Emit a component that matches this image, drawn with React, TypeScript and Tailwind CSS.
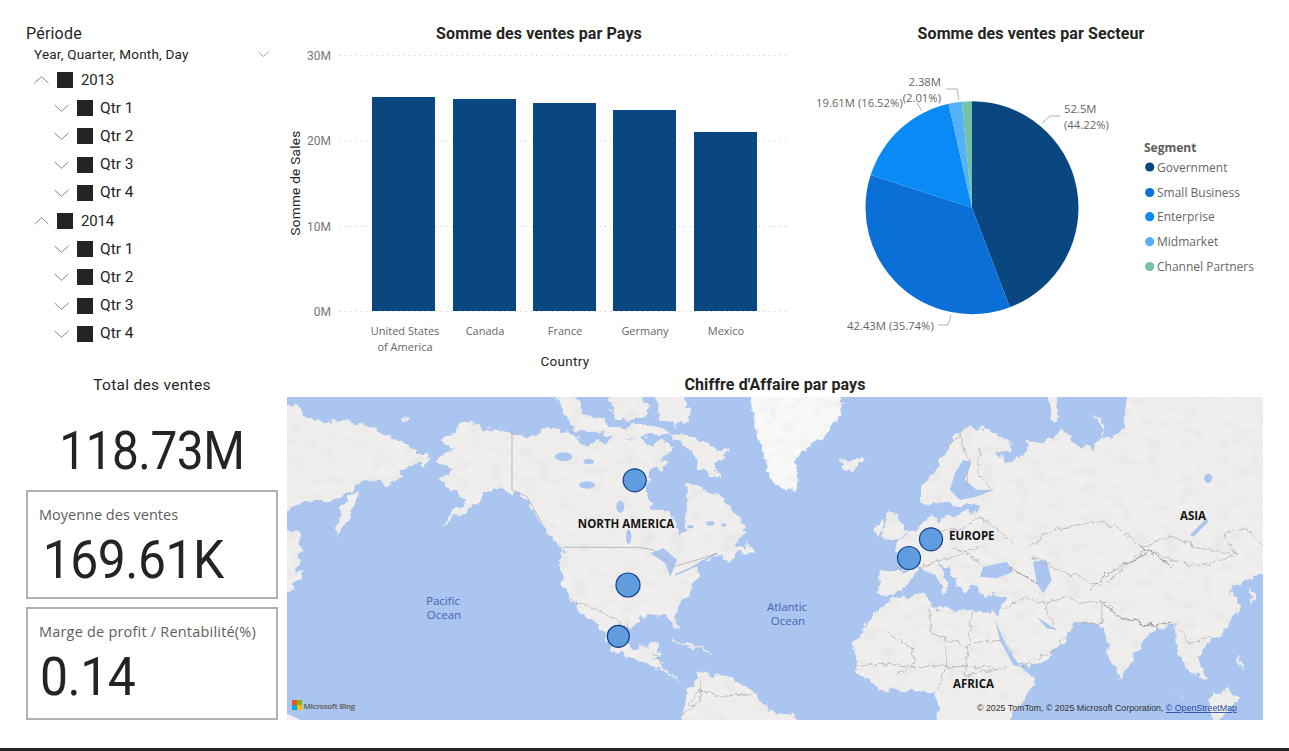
import React from "react"

const din = "font-['Roboto',sans-serif]"
const segoe = "font-['Open_Sans',sans-serif]"

const Chevron = ({ up = false, small = false }: { up?: boolean, small?: boolean }) => (
    <svg width={small ? 11 : 15} height={small ? 6 : 8} viewBox="0 0 16 9" preserveAspectRatio="none" className="shrink-0" fill="none" stroke="#7f7d7b" strokeWidth="1">
        <polyline points={up ? "0.5,8 8,0.8 15.5,8" : "0.5,1 8,8.2 15.5,1"} />
    </svg>
)

const TreeRow = ({ label, level }: { label: string, level: number }) => (
    <div className={`flex items-center h-[28.2px] ${level === 0 ? "pl-[8px]" : "pl-[28px]"}`}>
        <Chevron up={level === 0} />
        <span className="w-[16px] h-[16px] ml-[8px] bg-[#252423]" />
        <span className={`text-[#252423] ${din} ${level === 0 ? "ml-[8px] text-[15px] tracking-[-0.2px]" : "ml-[7px] text-[15.5px]"}`}>{label}</span>
    </div>
)

const quarters = ["Qtr 1", "Qtr 2", "Qtr 3", "Qtr 4"]

const Slicer = () => (
    <div className="h-[375px] pt-[24px]">
        <div className={`h-[20px] leading-[20px] text-[16px] tracking-[0.2px] text-[#252423] ${din}`}>Période</div>
        <div className="flex items-center justify-between h-[20px] mb-[2px] pl-[8px] pr-[18px]">
            <span className={`text-[13.5px] tracking-[0.2px] text-[#252423] ${din}`}>Year, Quarter, Month, Day</span>
            <Chevron small />
        </div>
        {["2013", "2014"].map((year) => (
            <div key={year}>
                <TreeRow label={year} level={0} />
                {quarters.map((q) => <TreeRow key={year + q} label={q} level={1} />)}
            </div>
        ))}
    </div>
)

const KpiCard = ({ label, value, height, pad, track = "" }: { label: string, value: string, height: string, pad: string, track?: string }) => (
    <div className={`w-[252px] border-2 border-[#b3b0ad] px-[11px] pt-[13px] ${height}`}>
        <div className={`text-[14.5px] leading-[20px] text-[#605e5c] ${segoe} ${track}`}>{label}</div>
        <div className={`text-[53px] leading-[60px] mt-[5px] tracking-[-0.5px] text-[#252423] scale-x-[0.94] origin-left ${din} ${pad}`}>{value}</div>
    </div>
)

const BarChart = () => {
    const ticks = [{ y: 55.7, t: "30M" }, { y: 141, t: "20M" }, { y: 226.5, t: "10M" }, { y: 311.7, t: "0M" }]
    const bars = [
        { x: 372, top: 97, a: "United States", b: "of America", c: 405 },
        { x: 453, top: 99, a: "Canada", c: 485 },
        { x: 533, top: 103, a: "France", c: 565 },
        { x: 613, top: 110, a: "Germany", c: 645 },
        { x: 694, top: 132, a: "Mexico", c: 726 },
    ]
    return (
        <svg width="516" height="328" viewBox="287 44 516 328" className="block">
            {ticks.map((k) => (
                <g key={k.t}>
                    <line x1="340" x2="790" y1={k.y} y2={k.y} stroke="#bdbbb8" strokeWidth="1" strokeDasharray="1 4.3" />
                    <text x="331" y={k.y + 4} textAnchor="end" fontSize="12" fill="#777" fontFamily="Roboto">{k.t}</text>
                </g>
            ))}
            {bars.map((b) => (
                <g key={b.a}>
                    <rect x={b.x} y={b.top} width="63" height={311 - b.top} fill="#0a4680" />
                    <text x={b.c} y="335" textAnchor="middle" fontSize="11" fill="#666" fontFamily="Open Sans">{b.a}</text>
                    {b.b && <text x={b.c} y="351" textAnchor="middle" fontSize="11" fill="#666" fontFamily="Open Sans">{b.b}</text>}
                </g>
            ))}
            <text x="565" y="366" textAnchor="middle" fontSize="13.5" fill="#252423" fontFamily="Roboto" letterSpacing="0.3">Country</text>
            <text transform="translate(300 183) rotate(-90)" textAnchor="middle" fontSize="13.5" fill="#252423" fontFamily="Roboto" letterSpacing="0.3">Somme de Sales</text>
        </svg>
    )
}

const slices = [
    { pct: 44.22, color: "#0a4680", name: "Government", y: 167 },
    { pct: 35.74, color: "#0a6fd6", name: "Small Business", y: 192.5 },
    { pct: 16.52, color: "#0a8af5", name: "Enterprise", y: 216.7 },
    { pct: 2.01, color: "#55b2f8", name: "Midmarket", y: 241.7 },
    { pct: 1.51, color: "#74c1a4", name: "Channel Partners", y: 266.5 },
]

const PieChart = () => {
    const cx = 972, cy = 207.7, r = 106.5
    let acc = 0
    const point = (p: number) => {
        const a = (p / 100) * Math.PI * 2
        return `${cx + r * Math.sin(a)} ${cy - r * Math.cos(a)}`
    }
    const label = { fontSize: 11.3, fill: "#666", fontFamily: "Open Sans" }
    const leader = { fill: "none", stroke: "#b3b0ad", strokeWidth: 1 }
    return (
        <svg width="486" height="328" viewBox="803 44 486 328" className="block">
            {slices.map((s) => {
                const start = acc
                acc += s.pct
                return <path key={s.name} d={`M${cx} ${cy} L${point(start)} A${r} ${r} 0 ${s.pct > 50 ? 1 : 0} 1 ${point(acc)} Z`} fill={s.color} />
            })}
            <polyline {...leader} points="1042,123 1050,116 1060,116" />
            <polyline {...leader} points="946,89 957,89 959,100" />
            <polyline {...leader} points="917,103 922,111" />
            <polyline {...leader} points="938,325 948,325 951,315" />
            <text x="1064" y="113" {...label}>52.5M</text>
            <text x="1064" y="129" {...label}>(44.22%)</text>
            <text x="816" y="107" {...label}>19.61M (16.52%)</text>
            <text x="941" y="86" textAnchor="end" {...label}>2.38M</text>
            <text x="941" y="102" textAnchor="end" {...label}>(2.01%)</text>
            <text x="847" y="330" {...label}>42.43M (35.74%)</text>
            <text x="1144" y="152" fontSize="12" fontWeight="700" fill="#605e5c" fontFamily="Open Sans">Segment</text>
            {slices.map((s) => (
                <g key={s.name + "-legend"}>
                    <circle cx="1149.7" cy={s.y} r="4.6" fill={s.color} />
                    <text x="1157" y={s.y + 4.5} fontSize="12" fill="#666" fontFamily="Open Sans">{s.name}</text>
                </g>
            ))}
        </svg>
    )
}

const land = "#f0efed"
const water = "#a9c5f0"
const border = "#b4b2ad"

const WorldMap = () => (
    <svg width="976" height="323" viewBox="287 397 976 323" className="block bg-[#a9c5f0]">
        <defs>
            <filter id="soft"><feGaussianBlur stdDeviation="0.35" /></filter>
            {/* rough coast lines plus faint shading on land */}
            <filter id="relief" x="-5%" y="-5%" width="110%" height="110%">
                <feTurbulence type="fractalNoise" baseFrequency="0.035" numOctaves="4" seed="7" result="coast" />
                <feDisplacementMap in="SourceGraphic" in2="coast" scale="34" xChannelSelector="R" yChannelSelector="G" result="rough" />
                <feTurbulence type="fractalNoise" baseFrequency="0.02 0.035" numOctaves="3" seed="4" />
                <feColorMatrix values="0 0 0 0 0.66  0 0 0 0 0.66  0 0 0 0 0.64  0 0 0 0.7 -0.3" />
                <feComposite in2="rough" operator="in" result="shade" />
                <feMerge><feMergeNode in="rough" /><feMergeNode in="shade" /></feMerge>
            </filter>
            <filter id="wobble" x="-5%" y="-5%" width="110%" height="110%">
                <feTurbulence type="fractalNoise" baseFrequency="0.05" numOctaves="3" seed="11" result="n" />
                <feDisplacementMap in="SourceGraphic" in2="n" scale="22" xChannelSelector="R" yChannelSelector="G" />
            </filter>
        </defs>
        <g filter="url(#soft)">
            {/* left half, traced at 3x from the Americas */}
            <g transform="translate(287 390) scale(0.3333)">
                <g fill={land} filter="url(#relief)">
                    <polygon points="-30,45 35,45 50,75 100,95 150,90 200,100 270,115 300,140 340,150 390,190 430,195 410,225 370,225 345,235 345,265 310,285 270,275 220,280 190,305 130,330 70,330 -30,365" />
                    <polygon points="215,300 205,340 175,400 155,445 150,380 185,320" />
                    <polygon points="30,420 45,470 40,510 20,545 50,540 20,590 -30,630 -30,410" />
                    <polygon points="340,85 370,85 360,97 340,95" />
                    <polygon points="465,150 500,125 540,90 590,115 640,120 675,125 720,145 760,120 790,110 830,130 880,140 890,165 930,150 960,160 990,130 1020,150 1060,140 1090,170 1130,150 1165,170 1130,205 1140,240 1100,230 1080,270 1075,320 1100,350 1150,370 1170,410 1185,440 1195,420 1200,340 1195,280 1240,290 1300,320 1340,360 1380,420 1345,460 1400,490 1350,490 1330,515 1290,495 1240,520 1220,590 1190,630 1160,680 1180,720 1165,710 1140,675 1060,680 1030,720 1010,700 1030,770 1080,770 1110,760 1125,790 1100,810 1130,830 1160,860 1200,880 1170,870 1110,830 1020,800 975,775 950,730 920,700 885,665 850,630 825,570 815,520 830,480 800,450 760,400 730,340 700,315 640,290 600,295 570,345 500,385 450,420 520,345 540,320 480,300 465,270 500,240 450,215 470,190 490,170" />
                    <polygon points="810,20 860,15 890,70 950,85 960,120 870,125 840,90" />
                    <polygon points="880,105 1000,112 1100,100 1150,130 1000,150" />
                    <polygon points="960,15 1060,10 1090,70 1020,100 980,80" />
                    <polygon points="1100,10 1190,10 1210,90 1170,110 1120,90" />
                    <polygon points="1150,130 1220,140 1270,170 1330,185 1280,220 1300,270 1240,240 1210,190" />
                    <polygon points="1180,1020 1200,900 1240,850 1320,860 1400,900 1440,960 1500,1020" />
                    <polygon points="1150,745 1210,760 1280,790 1220,775" />
                    <polygon points="1380,455 1410,490 1370,490" />
                    <polygon points="-30,960 30,985 70,1020 -30,1020" />
                </g>
                <g fill="#f9f9f8" filter="url(#relief)">
                    <polygon points="1390,0 1530,0 1530,300 1470,290 1440,220 1410,130 1395,60" />
                </g>
                <g fill={water}>
                    <polygon points="1090,490 1130,475 1170,510 1150,560 1135,520" />
                    <ellipse cx="830" cy="200" rx="26" ry="13" />
                    <ellipse cx="900" cy="285" rx="24" ry="11" />
                    <ellipse cx="1000" cy="350" rx="12" ry="18" />
                    <ellipse cx="1025" cy="440" rx="8" ry="22" />
                    <ellipse cx="905" cy="215" rx="16" ry="8" />
                    <ellipse cx="1270" cy="400" rx="12" ry="7" />
                    <ellipse cx="1210" cy="410" rx="10" ry="5" />
                    <ellipse cx="1310" cy="405" rx="8" ry="5" />
                </g>
                <polyline points="1165,555 1220,530 1290,490" fill="none" stroke={water} strokeWidth="5" />
                <g fill="none" stroke={border} strokeWidth="2.5">
                    <polyline points="675,125 675,300 720,320 765,400" />
                    <polyline points="830,472 1055,472 1100,480 1160,530 1230,510 1290,490" />
                </g>
                <g fill="none" stroke={border} strokeWidth="2.5" filter="url(#wobble)">
                    <polyline points="850,630 930,660 990,690 1020,720" />
                    <polyline points="1100,790 1130,830" />
                    <polyline points="1200,950 1240,900 1300,920 1400,910" />
                    <polyline points="1240,870 1240,930 1180,980" />
                </g>
            </g>
            {/* right half, Europe, Africa and Asia */}
            <g transform="translate(780 390) scale(0.3333)">
                <g fill="#f9f9f8" filter="url(#relief)">
                    <polygon points="-30,0 185,0 180,80 140,130 90,170 40,210 -30,280" />
                </g>
                <g fill={land} filter="url(#relief)">
                    <polygon points="175,205 250,210 210,250" />
                    <polygon points="805,10 830,10 835,90 815,80" />
                    <polygon points="935,70 975,100 965,140 1000,160 960,195 940,175 975,130" />
                    <polygon points="420,340 420,290 470,230 500,170 560,110 620,115 700,160 690,190 640,190 680,215 740,190 745,150 790,155 860,125 900,165 950,180 1000,140 1030,120 1040,60 1040,0 1480,0 1480,540 1400,570 1350,590 1385,650 1360,690 1320,740 1270,760 1255,800 1280,860 1230,850 1195,790 1180,700 1110,730 1070,790 1020,870 990,800 970,710 900,700 855,720 860,745 800,810 735,830 700,800 650,690 660,660 680,620 600,610 580,590 600,580 560,600 530,590 510,540 475,510 510,590 490,610 465,560 425,530 370,545 300,540 295,610 350,615 390,570 415,545 350,480 350,450 420,410 450,370 470,390 500,385 540,370 590,370 590,335 540,355 510,340 470,340 440,340" />
                    <polygon points="330,625 440,610 455,650 575,665 645,665 690,790 735,845 770,870 710,950 680,1020 470,1020 470,905 300,900 230,840 225,760 270,690" />
                    <polygon points="310,440 330,345 350,380 380,430 340,450" />
                    <polygon points="285,410 310,395 315,425 285,435" />
                    <polygon points="1290,925 1350,890 1370,930 1300,1020" />
                    <polygon points="1160,900 1225,930 1210,925" />
                    <polygon points="1375,790 1390,840 1375,830" />
                    <polygon points="1410,590 1430,620 1415,640" />
                    <polygon points="-30,965 40,975 70,1020 -30,1020" />
                </g>
                <g fill={water}>
                    <polygon points="510,300 525,250 550,210 575,215 555,270 590,300 640,300 590,320 540,330" />
                    <polygon points="610,530 680,515 700,545 650,565 600,560" />
                    <polygon points="760,515 800,510 815,570 790,610 770,580" />
                    <polygon points="645,690 680,770 720,830 700,825 660,750" />
                    <polygon points="770,680 830,720 800,715" />
                    <ellipse cx="1285" cy="265" rx="12" ry="14" />
                    <polygon points="1230,435 1280,385 1285,395 1240,440" />
                </g>
                <g fill="none" stroke={border} strokeWidth="2.5" filter="url(#wobble)">
                    <polyline points="315,725 400,780 400,830 350,850" />
                    <polyline points="450,650 450,730 495,745 565,770 575,665" />
                    <polyline points="575,755 660,755" />
                    <polyline points="230,830 300,820 400,830 500,830 640,830" />
                    <polyline points="495,745 500,830 470,905" />
                    <polyline points="565,770 555,860 680,830" />
                    <polyline points="755,465 800,430 880,405 960,395 1010,410 1080,470 1180,440 1250,470 1330,490 1365,490 1330,430 1400,415 1450,470" />
                    <polyline points="760,500 830,540 900,560 960,590 1000,560" />
                    <polyline points="1180,700 1230,760 1290,740" />
                    <polyline points="790,640 870,620 900,640 960,630 970,700 900,700" />
                    <polyline points="660,660 740,620 790,640 830,720" />
                    <polyline points="720,830 810,790 860,740" />
                    <polyline points="300,540 420,530 520,500 600,470" />
                    <polyline points="470,420 540,420 600,380 700,460" />
                    <polyline points="500,170 540,135 570,220 560,290" />
                    <polyline points="600,170 590,250 640,300" />
                    <polyline points="510,470 560,490 600,520" />
                    <polyline points="1000,560 1090,480 1250,530 1360,500" />
                </g>
                <g fill="none" stroke="#989690" strokeWidth="3" filter="url(#wobble)">
                    <polyline points="960,630 1020,680 1100,705 1180,700" />
                    <polyline points="690,530 770,580" />
                    <polyline points="930,600 1000,540 1100,490" />
                    <polyline points="1080,470 1180,530" />
                </g>
            </g>
        </g>
        <g fill="#141414" fontFamily="Open Sans" fontWeight="700" fontSize="11.5">
            <text x="626" y="528" textAnchor="middle">NORTH AMERICA</text>
            <text x="949" y="540">EUROPE</text>
            <text x="1180" y="520">ASIA</text>
            <text x="953" y="688">AFRICA</text>
        </g>
        <g fill="#4763b8" fontFamily="Open Sans" fontSize="11.5" textAnchor="middle">
            <text x="443" y="605">Pacific</text>
            <text x="444" y="619">Ocean</text>
            <text x="787" y="611">Atlantic</text>
            <text x="788" y="625">Ocean</text>
        </g>
        {[[634.7, 480.3, 11.5], [628, 585, 12], [618.3, 636.3, 11], [931, 539.3, 11.5], [909, 558, 11.5]].map(([x, y, r]) => (
            <circle key={x} cx={x} cy={y} r={r} fill="#5f9ddf" stroke="#123f8c" strokeWidth="1.2" />
        ))}
        <rect x="292" y="700" width="5" height="5" fill="#f25022" />
        <rect x="297" y="700" width="5" height="5" fill="#7fba00" />
        <rect x="292" y="705" width="5" height="5" fill="#00a4ef" />
        <rect x="297" y="705" width="5" height="5" fill="#ffb900" />
        <text x="303.5" y="708.5" fontSize="7.7" fontWeight="700" fill="#6b6b6b" fontFamily="Open Sans" letterSpacing="-0.3">Microsoft Bing</text>
        <text x="977" y="711" fontSize="8.8" fill="#333" fontFamily="Liberation Sans">© 2025 TomTom, © 2025 Microsoft Corporation, <tspan fill="#2a4ba0" textDecoration="underline">© OpenStreetMap</tspan></text>
    </svg>
)

const Title = ({ text, className = "" }: { text: string, className?: string }) => (
    <div className={`text-center text-[16px] tracking-[0.1px] font-bold leading-[20px] text-[#252423] ${din} ${className}`}>{text}</div>
)

const App = () => {
    return (
        <div className="w-[1289px] h-[751px] bg-white flex flex-col overflow-hidden">
            <div className="flex flex-1">
                <div className="w-[287px] pl-[26px] shrink-0">
                    <Slicer />
                    <div className={`h-[20px] w-[252px] text-center text-[15.5px] tracking-[0.3px] leading-[20px] text-[#252423] ${din}`}>Total des ventes</div>
                    <div className={`w-[252px] h-[95px] pt-[19px] flex items-center justify-center text-[53px] tracking-[-0.5px] text-[#252423] ${din}`}>
                        <span className="scale-x-[0.9]">118.73M</span>
                    </div>
                    <KpiCard label="Moyenne des ventes" value="169.61K" height="h-[109px]" pad="pl-[4px]" />
                    <div className="h-[8px]" />
                    <KpiCard label="Marge de profit / Rentabilité(%)" value="0.14" height="h-[113px]" pad="pl-[1px]" track="tracking-[0.2px]" />
                </div>
                <div className="flex-1 flex flex-col">
                    <div className="flex h-[372px]">
                        <div className="w-[516px] pt-[24px]">
                            <Title text="Somme des ventes par Pays" className="pr-[12px]" />
                            <BarChart />
                        </div>
                        <div className="w-[486px] pt-[24px]">
                            <Title text="Somme des ventes par Secteur" className="pr-[30px]" />
                            <PieChart />
                        </div>
                    </div>
                    <div className="h-[25px] pt-[3px]">
                        <Title text="Chiffre d'Affaire par pays" className="w-[976px]" />
                    </div>
                    <WorldMap />
                </div>
            </div>
            <div className="h-[3px] bg-[#252423] shrink-0" />
        </div>
    )
}

export default App
